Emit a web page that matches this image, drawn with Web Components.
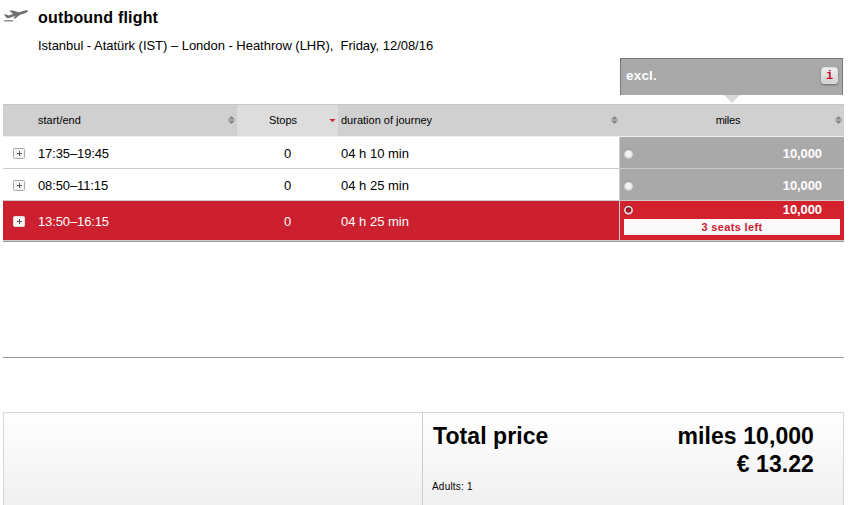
<!DOCTYPE html>
<html lang="en">
<head>
    <meta charset="UTF-8">
    <meta name="viewport" content="width=device-width, initial-scale=1.0">
    <title>outbound flight</title>
    <style>
        body {
            margin: 0;
            height: 505px;
            overflow: hidden;
            background: #fff;
            color: #000;
            font-family: "Liberation Sans", Arial, sans-serif;
            font-size: 13px;
        }
    </style>
</head>
<body>
    <flight-page>
        <flight-header>
            <span slot="title">outbound flight</span>
            <span slot="route">Istanbul - Atatürk (IST) – London - Heathrow (LHR),&nbsp; Friday, 12/08/16</span>
        </flight-header>
        <fare-tab>excl.</fare-tab>
        <flight-table>
            <flight-row time="17:35–19:45" stops="0" duration="04 h 10 min" miles="10,000"></flight-row>
            <flight-row time="08:50–11:15" stops="0" duration="04 h 25 min" miles="10,000"></flight-row>
            <flight-row time="13:50–16:15" stops="0" duration="04 h 25 min" miles="10,000" selected>3 seats left</flight-row>
        </flight-table>
        <price-summary slot="footer">
            <span slot="label">Total price</span>
            <span slot="miles">miles 10,000</span>
            <span slot="cash">€ 13.22</span>
            <span slot="passengers">Adults: 1</span>
        </price-summary>
    </flight-page>

    <script>
        class BaseElement extends HTMLElement {
            constructor() {
                super();
                this.attachShadow({ mode: 'open' });
            }

            connectedCallback() {
                this.shadowRoot.innerHTML = this.template();
            }
        }

        class FlightPage extends BaseElement {
            template() {
                return `
                    <style>
                        :host {
                            display: flex;
                            flex-direction: column;
                            width: 841px;
                            height: 505px;
                            margin-left: 3px;
                        }
                        main {
                            box-sizing: border-box;
                            height: 358px;
                            border-bottom: 1px solid #999;
                        }
                        footer {
                            margin-top: 54px;
                        }
                    </style>
                    <main><slot></slot></main>
                    <footer><slot name="footer"></slot></footer>
                `;
            }
        }

        class FlightHeader extends BaseElement {
            template() {
                return `
                    <style>
                        :host {
                            display: grid;
                            grid-template-columns: 35px 1fr;
                            height: 58px;
                        }
                        svg {
                            display: block;
                            margin: 8px 0 0;
                        }
                        h1 {
                            margin: 8px 0 0;
                            font-size: 16px;
                            line-height: 19px;
                            letter-spacing: 0.19px;
                        }
                        p {
                            margin: 11px 0 0;
                            line-height: 16px;
                            white-space: nowrap;
                            letter-spacing: -0.03px;
                        }
                    </style>
                    <svg width="26" height="15" viewBox="0 0 26 15" fill="#707070">
                        <path d="M1 6.6l1.6-.4 2.9 1.4 4.6-1.5L6.6 3l2-.7 7.6 2 4.4-1.5c2-.6 3.9-.8 4.3-.1.3.9-1 1.8-3 2.5l-4.7 1.6-5 3.6-1.9.4 2-2.8-5.5 1.8c-1.6.5-2.6.5-3.5-.3z"/>
                        <path d="M1.2 12h9v1.5h-9z" opacity=".8"/>
                    </svg>
                    <div>
                        <h1><slot name="title"></slot></h1>
                        <p><slot name="route"></slot></p>
                    </div>
                `;
            }
        }

        class FareTab extends BaseElement {
            template() {
                return `
                    <style>
                        :host {
                            position: relative;
                            display: flex;
                            align-items: center;
                            justify-content: space-between;
                            box-sizing: border-box;
                            width: 223px;
                            height: 37px;
                            margin: 0 1px 9px auto;
                            padding: 0 4px 3px 5px;
                            border: 1px solid #777;
                            border-bottom: 0;
                            background: #a9a9a9;
                            color: #fff;
                            font-size: 13.5px;
                            font-weight: bold;
                            letter-spacing: 0.2px;
                        }
                        /* pointer between the tab and the miles column */
                        :host::after {
                            content: "";
                            position: absolute;
                            top: 36px;
                            left: 103px;
                            border: 8px solid transparent;
                            border-top-color: #d9d9d9;
                            border-bottom: 0;
                        }
                        button {
                            width: 17px;
                            height: 17px;
                            margin: 0;
                            padding: 1px 0 0;
                            border: 1px solid #ddd;
                            border-radius: 3px;
                            background: linear-gradient(#eee, #d2d2d2);
                            box-shadow: 0 1px 2px #666;
                            color: #c8102e;
                            font: bold 12px/14px "Liberation Mono", monospace;
                        }
                    </style>
                    <slot></slot>
                    <button>i</button>
                `;
            }
        }

        class SortArrows extends BaseElement {
            template() {
                const down = this.hasAttribute('down');
                return `
                    <style>
                        :host { display: block; width: 7px; height: 8px; }
                        svg { display: block; }
                    </style>
                    <svg width="7" height="8" viewBox="0 0 7 8">
                        ${down
                            ? '<path d="M.5 3h6L3.5 6.2z" fill="#d01f2e"/>'
                            : '<path d="M0 3.6L3.5 0 7 3.6zM0 4.6h7L3.5 8z" fill="#848484"/>'}
                    </svg>
                `;
            }
        }

        class FlightTable extends BaseElement {
            template() {
                return `
                    <style>
                        :host { display: block; }
                        header {
                            display: grid;
                            grid-template-columns: 234px 101px 281px 225px;
                            height: 31px;
                            border-top: 1px solid #c6c6c6;
                            border-bottom: 1px solid #efefef;
                            background: #d0d0d0;
                            font-size: 11px;
                        }
                        div {
                            display: flex;
                            align-items: center;
                            padding: 0 2px 1px 0;
                        }
                        span { flex: 1; }
                        .start { padding-left: 35px; }
                        .stops {
                            background: #ddd;
                            text-align: center;
                        }
                        .duration { padding: 0 1px 1px 3px; }
                        .miles { text-align: center; }
                        .miles span {
                            padding-left: 2px;
                            letter-spacing: -0.2px;
                        }
                    </style>
                    <header>
                        <div class="start"><span>start/end</span><sort-arrows></sort-arrows></div>
                        <div class="stops"><span>Stops</span><sort-arrows down></sort-arrows></div>
                        <div class="duration"><span>duration of journey</span><sort-arrows></sort-arrows></div>
                        <div class="miles"><span>miles</span><sort-arrows></sort-arrows></div>
                    </header>
                    <slot></slot>
                `;
            }
        }

        class FlightRow extends BaseElement {
            template() {
                const selected = this.hasAttribute('selected');
                return `
                    <style>
                        :host {
                            display: grid;
                            grid-template-columns: 35px 199px 101px 281px 225px;
                            align-items: center;
                            height: 31px;
                            border-bottom: 1px solid #ccc;
                        }
                        :host([selected]) {
                            height: 39px;
                            background: #cc1f2f;
                            color: #fff;
                            box-shadow: 0 1px #999;
                        }
                        .plus { display: block; margin: 1px 0 0 10px; }
                        .time, .stops, .duration { padding-top: 2px; }
                        .time { letter-spacing: -0.12px; }
                        .stops { text-align: center; }
                        .duration { padding-left: 3px; }
                        .fare {
                            align-self: stretch;
                            display: flex;
                            flex-direction: column;
                            justify-content: center;
                            border-left: 1px solid #ccc;
                            background: #a9a9a9;
                            color: #fff;
                            font-weight: bold;
                        }
                        .choice {
                            display: flex;
                            align-items: center;
                            justify-content: space-between;
                            padding: 2px 22px 0 3px;
                            line-height: 17px;
                            letter-spacing: -0.1px;
                        }
                        :host([selected]) .fare {
                            justify-content: flex-start;
                            background: #d4212e;
                        }
                        :host([selected]) .choice { padding-top: 0; }
                        .seats {
                            height: 16px;
                            margin: 1px 4px 0;
                            background: #fafafa;
                            color: #d0202e;
                            font-size: 11px;
                            line-height: 16px;
                            text-align: center;
                            letter-spacing: 0.35px;
                        }
                    </style>
                    <svg class="plus" width="12" height="11" viewBox="0 0 12 11">
                        <rect x=".5" y=".5" width="11" height="10" rx="1" fill="#f5f5f5" stroke="${selected ? '#ddd' : '#aaa'}"/>
                        <path d="M4 5.5h5M6.5 3v5" stroke="#555"/>
                    </svg>
                    <span class="time">${this.getAttribute('time')}</span>
                    <span class="stops">${this.getAttribute('stops')}</span>
                    <span class="duration">${this.getAttribute('duration')}</span>
                    <div class="fare">
                        <div class="choice">
                            <svg width="11" height="12" viewBox="0 0 11 12">
                                <circle cx="5.5" cy="5.5" r="4.5" fill="${selected ? '#8a2a2a' : '#888'}"/>
                                <circle cx="5.5" cy="6.2" r="4.4" fill="#e2e2e2"/>
                                ${selected
                                    ? '<circle cx="5.5" cy="6" r="2.8" fill="#8c1420"/><circle cx="5.5" cy="6.6" r="1.6" fill="#b81828"/>'
                                    : '<circle cx="5.5" cy="5.8" r="2.6" fill="#f6f6f6"/>'}
                            </svg>
                            <span>${this.getAttribute('miles')}</span>
                        </div>
                        ${selected ? '<div class="seats"><slot></slot></div>' : ''}
                    </div>
                `;
            }
        }

        class PriceSummary extends BaseElement {
            template() {
                return `
                    <style>
                        :host {
                            display: grid;
                            grid-template-columns: 418px 1fr;
                            box-sizing: border-box;
                            height: 93px;
                            border: 1px solid #d5d5d5;
                            border-bottom: 0;
                            background: linear-gradient(#fff, #f0f0f0);
                        }
                        section {
                            grid-column: 2;
                            border-left: 1px solid #ccc;
                            padding: 9px 29px 0 10px;
                        }
                        .total {
                            display: flex;
                            justify-content: space-between;
                            font-size: 23px;
                            font-weight: bold;
                            line-height: 28px;
                            letter-spacing: 0.08px;
                        }
                        .amount { text-align: right; }
                        .amount div { white-space: nowrap; }
                        small {
                            display: block;
                            margin: 3px 0 0 -1px;
                            font-size: 10px;
                            line-height: 12px;
                            letter-spacing: 0.2px;
                        }
                    </style>
                    <section>
                        <div class="total">
                            <slot name="label"></slot>
                            <div class="amount">
                                <div><slot name="miles"></slot></div>
                                <div><slot name="cash"></slot></div>
                            </div>
                        </div>
                        <small><slot name="passengers"></slot></small>
                    </section>
                `;
            }
        }

        customElements.define('flight-page', FlightPage);
        customElements.define('flight-header', FlightHeader);
        customElements.define('fare-tab', FareTab);
        customElements.define('sort-arrows', SortArrows);
        customElements.define('flight-table', FlightTable);
        customElements.define('flight-row', FlightRow);
        customElements.define('price-summary', PriceSummary);
    </script>
</body>
</html>
